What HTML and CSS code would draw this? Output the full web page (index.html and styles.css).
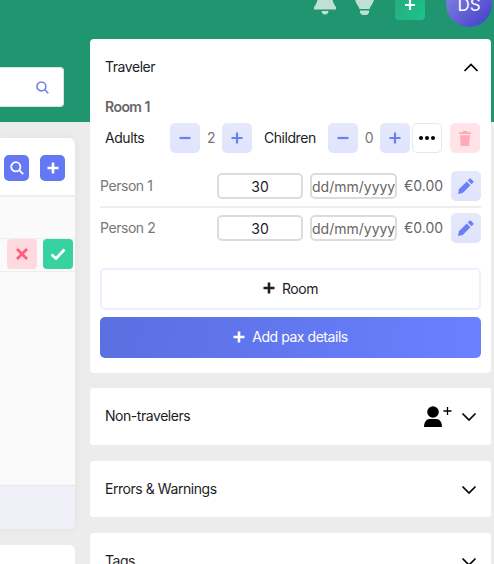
FILE: index.html
```html
<!DOCTYPE html>
<html lang="en">
<head>
    <meta charset="UTF-8">
    <title>Traveler</title>
    <link rel="stylesheet" href="styles.css">
</head>
<body>
    <div class="topbar">
        <svg class="top-icon bell" viewBox="0 0 22 27"><path d="M11 0c4 0 6.500 3 7 8 .5 5 1.500 8 4 11v2.500H0V19c2.500-3 3.500-6 4-11 .5-5 3-8 7-8z"/><path d="M7.500 23h7c0 2-1.500 3.500-3.500 3.500S7.500 25 7.500 23z"/></svg>
        <svg class="top-icon bulb" viewBox="0 0 19 25"><path d="M9.500 0C15 0 19 3.500 19 8.500c0 4.500-3.500 7-4.500 10.500h-10C3.500 15.500 0 13 0 8.500 0 3.500 4 0 9.500 0z"/><path d="M5 20.500h9v1.500c0 1.500-1.500 3-3 3H8c-1.500 0-3-1.500-3-3z"/></svg>
        <div class="top-add"><svg viewBox="0 0 12 12"><path d="M6 1v10M1 6h10"/></svg></div>
        <div class="avatar">DS</div>
    </div>

    <div class="content">
        <div class="side">
            <div class="search-box">
                <svg viewBox="0 0 14 14"><circle cx="5.800" cy="5.800" r="4.800"/><path d="M9.200 9.200l4 4"/></svg>
            </div>
            <div class="table-card">
                <div class="toolbar">
                    <div class="tool-btn"><svg viewBox="0 0 14 14"><circle cx="5.800" cy="5.800" r="4.600"/><path d="M9.200 9.200l4 4"/></svg></div>
                    <div class="tool-btn"><svg class="plus" viewBox="0 0 12 12"><path d="M6 .5v11M.5 6h11"/></svg></div>
                </div>
                <div class="table-head"></div>
                <div class="table-row">
                    <div class="row-btn reject"><svg viewBox="0 0 12 12"><path d="M1 1l10 10M11 1L1 11"/></svg></div>
                    <div class="row-btn accept"><svg viewBox="0 0 16 12"><path d="M1.500 6.500l4.500 4 8.500-9"/></svg></div>
                </div>
                <div class="table-body"></div>
                <div class="table-foot"></div>
            </div>
            <div class="next-card"></div>
        </div>

        <div class="main">
            <div class="panel">
                <div class="panel-head">
                    <span class="label">Traveler</span>
                    <svg class="chevron" viewBox="0 0 16 9"><path d="M1.500 8L8 1.500 14.500 8"/></svg>
                </div>
                <div class="room-title">Room 1</div>
                <div class="pax-row">
                    <span class="label adults">Adults</span>
                    <div class="step-btn"><svg viewBox="0 0 12 12"><path d="M.5 6h11"/></svg></div>
                    <span class="label pax-count">2</span>
                    <div class="step-btn"><svg viewBox="0 0 12 12"><path d="M6 .5v11M.5 6h11"/></svg></div>
                    <span class="label children">Children</span>
                    <div class="step-btn"><svg viewBox="0 0 12 12"><path d="M.5 6h11"/></svg></div>
                    <span class="label pax-count">0</span>
                    <div class="step-btn"><svg viewBox="0 0 12 12"><path d="M6 .5v11M.5 6h11"/></svg></div>
                    <div class="more-btn"><svg viewBox="0 0 16 4"><circle cx="2" cy="2" r="2"/><circle cx="8" cy="2" r="2"/><circle cx="14" cy="2" r="2"/></svg></div>
                    <div class="trash-btn"><svg viewBox="0 0 12 15"><path d="M4 0h4l.6 1.200H12v1.800H0V1.200h3.400z"/><path d="M1 4.200h10l-.7 10c0 .4-.4.8-.9.8H2.600c-.5 0-.9-.4-.9-.8z"/></svg></div>
                </div>
                <div class="person first">
                    <span class="label person-name">Person 1</span>
                    <input class="age" type="text" value="30">
                    <input class="date" type="text" value="dd/mm/yyyy">
                    <span class="label price">€0.00</span>
                    <div class="edit-btn"><svg viewBox="0 0 16 16"><path d="M11.300.9c.5-.5 1.300-.5 1.800 0l2 2c.5.500.5 1.300 0 1.800l-1.600 1.600-3.800-3.800zM8.700 3.500l3.800 3.800-7.800 7.800-4.700 .9.900-4.700z"/></svg></div>
                </div>
                <div class="person">
                    <span class="label person-name">Person 2</span>
                    <input class="age" type="text" value="30">
                    <input class="date" type="text" value="dd/mm/yyyy">
                    <span class="label price">€0.00</span>
                    <div class="edit-btn"><svg viewBox="0 0 16 16"><path d="M11.300.9c.5-.5 1.300-.5 1.800 0l2 2c.5.500.5 1.300 0 1.800l-1.600 1.600-3.800-3.800zM8.700 3.500l3.800 3.800-7.800 7.800-4.700 .9.900-4.700z"/></svg></div>
                </div>
                <div class="add-room"><svg viewBox="0 0 12 12"><path d="M6 .5v11M.5 6h11"/></svg>Room</div>
                <div class="add-pax"><svg viewBox="0 0 12 12"><path d="M6 .5v11M.5 6h11"/></svg>Add pax details</div>
            </div>

            <div class="fold">
                <span class="label fold-title">Non-travelers</span>
                <svg class="user-add" viewBox="0 0 28 21"><circle cx="9" cy="6" r="5.800"/><path d="M0 21c0-5 2.500-8 5.500-8h7c3 0 5.500 3 5.500 8z"/><path class="thin" d="M23.500 1v8M19.500 5h8"/></svg>
                <svg class="chevron" viewBox="0 0 16 9"><path d="M1.500 1.500L8 8l6.500-6.500"/></svg>
            </div>
            <div class="fold">
                <span class="label fold-title">Errors &amp; Warnings</span>
                <svg class="chevron" viewBox="0 0 16 9"><path d="M1.500 1.500L8 8l6.500-6.500"/></svg>
            </div>
            <div class="fold">
                <span class="label fold-title">Tags</span>
                <svg class="chevron" viewBox="0 0 16 9"><path d="M1.500 1.500L8 8l6.500-6.500"/></svg>
            </div>
        </div>
    </div>
</body>
</html>
```

FILE: styles.css
```css
html, body { margin: 0; padding: 0; }

body {
    width: 494px;
    height: 564px;
    overflow: hidden;
    background: linear-gradient(#1f9670 122px, #ececec 122px);
    font-family: "Inter", "Liberation Sans", sans-serif;
    font-size: 14px;
    letter-spacing: -.45px;
    color: #1d1d1f;
}

svg { display: block; }

/* text sits a pixel high in its row */
.label { padding-bottom: 2px; flex: none; }

/* top bar, cut off by the window */
.topbar {
    height: 39px;
    display: flex;
    justify-content: flex-end;
    align-items: flex-end;
    overflow: hidden;
    padding-right: 2px;
}

.top-icon { fill: #bfe0d3; margin-bottom: 24px; flex: none; }
.bell { width: 22px; height: 27px; margin-right: 19px; }
.bulb { width: 19px; height: 25px; margin-right: 21px; }

.top-add {
    width: 30px;
    height: 30px;
    margin-right: 21px;
    margin-bottom: 19px;
    border-radius: 4px;
    background: linear-gradient(135deg, #2aa77d, #1bc48c);
    display: flex;
    align-items: flex-start;
    justify-content: center;
    flex: none;
}

.top-add svg {
    width: 12px;
    height: 12px;
    margin-top: 9px;
    stroke: #fff;
    stroke-width: 2.200;
    fill: none;
}

.avatar {
    width: 46px;
    height: 46px;
    flex: none;
    margin-bottom: 12px;
    border-radius: 50%;
    background: linear-gradient(135deg, #8e8be6, #3f3cc8);
    color: #fff;
    font-size: 17px;
    letter-spacing: 0;
    line-height: 48px;
    text-align: center;
}

.content { display: flex; gap: 15px; }

/* left column, runs off the window */
.side { width: 75px; flex: none; }

.search-box {
    width: 64px;
    height: 40px;
    margin-top: 28px;
    box-sizing: border-box;
    background: #fff;
    border-radius: 0 4px 4px 0;
    border: 1px solid #d5e6df;
    border-left: 0;
    display: flex;
    align-items: center;
    justify-content: flex-end;
    padding-right: 14px;
}

.search-box svg { width: 13px; height: 13px; fill: none; stroke: #6a80f5; stroke-width: 1.700; }

.table-card {
    margin-top: 31px;
    height: 391px;
    background: #fff;
    border-radius: 0 6px 6px 0;
    box-shadow: 0 0 8px rgba(0, 0, 0, .05);
    display: flex;
    flex-direction: column;
}

.toolbar {
    height: 59px;
    box-sizing: border-box;
    padding: 17px 10px 0 4px;
    display: flex;
    justify-content: space-between;
    border-bottom: 2px solid #eeeeee;
}

.tool-btn {
    width: 25px;
    height: 26px;
    border-radius: 5px;
    background: #6478f5;
    display: flex;
    align-items: center;
    justify-content: center;
}

.tool-btn svg { width: 14px; height: 14px; fill: none; stroke: #fff; stroke-width: 1.800; }
.tool-btn svg.plus { width: 12px; height: 12px; stroke-width: 2.600; }

.table-head { height: 41px; background: #fafafa; }

.table-row {
    height: 34px;
    box-sizing: border-box;
    padding: 0 2px 0 7px;
    display: flex;
    justify-content: space-between;
    background: #fafafa;
    border-top: 1px solid #eeeeee;
    border-bottom: 1px solid #eeeeee;
}

.row-btn {
    width: 30px;
    height: 30px;
    border-radius: 4px;
    display: flex;
    align-items: center;
    justify-content: center;
}

.row-btn svg { fill: none; }
.reject { background: #ffd9e0; }
.reject svg { width: 12px; height: 12px; stroke: #ff5c78; stroke-width: 2.800; }
.accept { background: #36d3a0; }
.accept svg { width: 16px; height: 12px; stroke: #fff; stroke-width: 2.800; }

.table-body { height: 213px; background: #fafafa; }

.table-foot {
    flex: 1;
    background: #f0f1f8;
    border-top: 1px solid #e8e8ec;
    border-radius: 0 0 6px 0;
}

.next-card {
    margin-top: 16px;
    height: 60px;
    background: #fff;
    border-radius: 0 6px 0 0;
}

/* right column */
.main { width: 401px; flex: none; }

.panel {
    height: 334px;
    box-sizing: border-box;
    padding: 0 10px;
    background: #fff;
    border-radius: 4px;
}

.panel-head {
    height: 56px;
    padding: 0 2px 0 5px;
    display: flex;
    align-items: center;
    justify-content: space-between;
}

.chevron { width: 16px; height: 9px; fill: none; stroke: #000; stroke-width: 1.700; flex: none; }

.room-title {
    height: 24px;
    line-height: 23px;
    padding-left: 5px;
    font-weight: 600;
    letter-spacing: -.55px;
    color: #666666;
}

.pax-row {
    height: 30px;
    margin-top: 4px;
    padding-left: 5px;
    display: flex;
    align-items: center;
}

.adults { width: 65px; }
.children { width: 64px; margin-left: 12px; }

.pax-count { width: 22px; text-align: center; color: #777777; }

.step-btn, .more-btn, .trash-btn, .edit-btn {
    width: 30px;
    height: 30px;
    flex: none;
    box-sizing: border-box;
    border-radius: 5px;
    display: flex;
    align-items: center;
    justify-content: center;
}

.step-btn, .edit-btn { background: linear-gradient(#e6e9fb, #dfe3fd); }

.step-btn svg { width: 12px; height: 12px; fill: none; stroke: #6a80f5; stroke-width: 2.200; }

.more-btn { margin-left: 2px; background: #fff; border: 1px solid #e3e6fb; }
.more-btn svg { width: 16px; height: 4px; fill: #000; }

.trash-btn { margin-left: 8px; background: #ffe3e8; }
.trash-btn svg { width: 12px; height: 15px; fill: #ffaab8; }

.person {
    height: 30px;
    margin-top: 5px;
    display: flex;
    align-items: center;
    color: #777777;
}

.person.first {
    height: 37px;
    margin-top: 18px;
    padding-bottom: 5px;
    border-bottom: 2px solid #eeeeee;
    box-sizing: border-box;
}

.person-name { width: 117px; }

.age, .date {
    height: 26px;
    box-sizing: border-box;
    padding: 0;
    border: 2px solid #dcdcdc;
    border-radius: 5px;
    font-family: inherit;
    font-size: 14px;
    letter-spacing: 0;
    background: #fff;
}

.age { width: 86px; margin-right: 7px; text-align: center; color: #1d1d1f; }
.date { width: 87px; margin-right: 7px; text-align: center; color: #666666; }

.price { width: 47px; letter-spacing: 0; color: #666666; }

.edit-btn svg { width: 16px; height: 16px; fill: #6a80f5; }

.add-room, .add-pax {
    border-radius: 5px;
    box-sizing: border-box;
    padding-bottom: 2px;
    display: flex;
    align-items: center;
    justify-content: center;
    gap: 7px;
}

.add-room svg, .add-pax svg { width: 12px; height: 12px; fill: none; stroke-width: 2.600; }

.add-room {
    height: 42px;
    margin-top: 25px;
    border: 2px solid #eef0ff;
}

.add-room svg { stroke: #1d1d1f; }

.add-pax {
    height: 41px;
    margin-top: 7px;
    color: #fff;
    background: linear-gradient(100deg, #5a6fe0, #6a80ff);
}

.add-pax svg { stroke: #fff; }

.fold {
    height: 56px;
    margin-top: 16px;
    padding: 0 14px 0 15px;
    background: #fff;
    border-radius: 3px;
    display: flex;
    align-items: center;
}

.panel + .fold { height: 57px; margin-top: 15px; }

.fold-title { flex: 1; }

.user-add { width: 28px; height: 21px; margin-right: 9px; fill: #000; }
.user-add .thin { fill: none; stroke: #000; stroke-width: 1.300; }
```
